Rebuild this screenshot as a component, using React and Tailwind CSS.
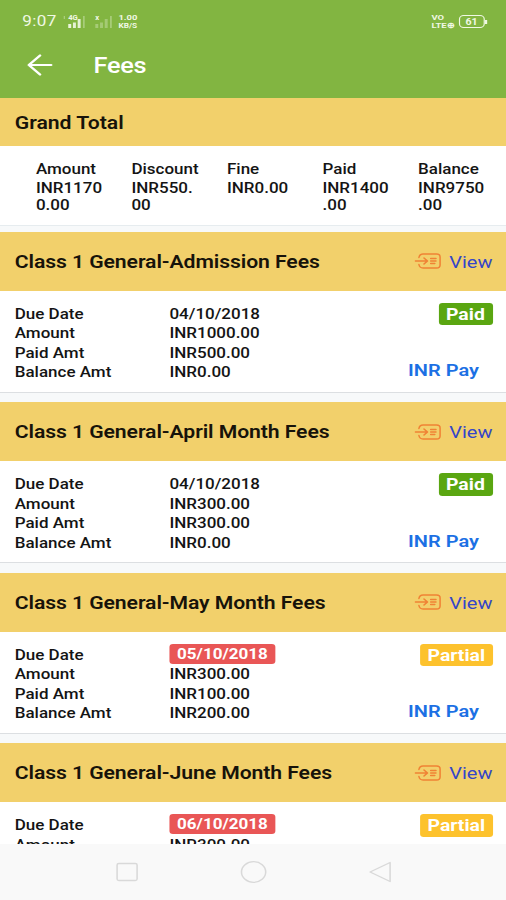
import React from "react";

const totals = [
  { label: "Amount", lines: ["INR1170", "0.00"] },
  { label: "Discount", lines: ["INR550.", "00"] },
  { label: "Fine", lines: ["INR0.00"] },
  { label: "Paid", lines: ["INR1400", ".00"] },
  { label: "Balance", lines: ["INR9750", ".00"] },
];

const fees = [
  { title: "Class 1 General-Admission Fees", due: "04/10/2018", amount: "INR1000.00", paid: "INR500.00", balance: "INR0.00", status: "Paid" },
  { title: "Class 1 General-April Month Fees", due: "04/10/2018", amount: "INR300.00", paid: "INR300.00", balance: "INR0.00", status: "Paid" },
  { title: "Class 1 General-May Month Fees", due: "05/10/2018", amount: "INR300.00", paid: "INR100.00", balance: "INR200.00", status: "Partial", overdue: true },
  { title: "Class 1 General-June Month Fees", due: "06/10/2018", amount: "INR300.00", paid: "INR100.00", balance: "INR200.00", status: "Partial", overdue: true },
];

const Signal = ({ tag, faded }) => (
  <svg width="19" height="15" viewBox="0 0 19 15" fill="#f0f8e4">
    {!faded && <rect x="0" y="2" width="1" height="3" opacity="0.5" />}
    <text x="4" y="5.5" fontSize="6.5" fontWeight="700">{tag}</text>
    <g opacity={faded ? 0.35 : 1}>
      <rect x="4" y="10" width="2.5" height="4" opacity="0.95" />
      <rect x="8" y="8.5" width="2.5" height="5.5" opacity="0.9" />
      <rect x="12" y="5" width="2.5" height="9" opacity="0.9" />
    </g>
    <rect x="16.5" y="2" width="1.5" height="12" opacity="0.35" />
  </svg>
);

const StatusBar = () => (
  <div className="flex h-[43px] items-center pl-[19px] pr-[16.5px] text-[#f0f8e4]">
    <span className="pt-[2px] text-[14.5px] leading-none tracking-[0.3px]">9:07</span>
    <div className="ml-[6px] flex gap-[4px]">
      <Signal tag="4G" />
      <Signal tag="x" faded />
    </div>
    <div className="ml-[4px] w-[17px] text-center text-[8px] font-bold leading-[8px]">
      <div>1.00</div>
      <div className="text-[7px]">KB/S</div>
    </div>
    <div className="ml-auto text-[8px] font-bold leading-[7.5px]">
      <div>VO</div>
      <div>LTE⊕</div>
    </div>
    <div className="ml-[3px] flex items-center">
      <div className="flex h-[13px] w-[22.5px] items-center justify-center rounded-[4px] border border-[#f0f8e4] pt-px text-[9px] font-bold leading-none">61</div>
      <div className="h-[4px] w-[1.5px] bg-[#f0f8e4]" />
    </div>
  </div>
);

const ViewIcon = () => (
  <svg width="23" height="16" viewBox="0 0 23 16" fill="none" stroke="#f08235" strokeWidth="1.3" strokeLinecap="round" strokeLinejoin="round">
    <path d="M4 4.5C4.4 2 5.6 1 7.5 1H19C21 1 22 2 22 4V12C22 14 21 15 19 15H7.5C5.6 15 4.4 14 4 11.5" />
    <path d="M1 8H11M8.3 5L11.3 8L8.3 11" />
    <path d="M14 5.5H18.5M14 8H18.5M14 10.5H17.5" />
  </svg>
);

const FeeCard = ({ fee }) => (
  <section className="h-[170.5px] shrink-0">
    <div className="flex h-[59px] items-center bg-[#f2d06b] pl-[12.5px] pr-[11.5px]">
      <h2 className="text-[18px] font-semibold tracking-[-0.07px] text-[#17130a]">{fee.title}</h2>
      <div className="ml-auto flex items-center gap-[7px]">
        <ViewIcon />
        <span className="pt-[3px] text-[17px] text-[#3546c8]">View</span>
      </div>
    </div>
    <div className="flex h-[102px] border-b border-[#dcdfe2] bg-white pl-[12.5px] pr-[11.5px] pt-[13px]">
      <dl className="grid h-[78px] w-[230px] grid-cols-[131.5px_1fr] grid-rows-4 text-[14.45px] font-medium leading-[21px] text-[#141414]">
        <dt>Due Date</dt>
        <dd>
          {fee.overdue ? (
            <span className="-mt-px block h-[20px] w-[90px] rounded-[3px] bg-[#e95656] text-center font-bold leading-[21px] text-white">{fee.due}</span>
          ) : fee.due}
        </dd>
        <dt>Amount</dt>
        <dd>{fee.amount}</dd>
        <dt>Paid Amt</dt>
        <dd>{fee.paid}</dd>
        <dt>Balance Amt</dt>
        <dd>{fee.balance}</dd>
      </dl>
      <div className="-mt-px ml-auto flex flex-col items-end">
        {fee.status === "Paid" ? (
          <span className="h-[22.5px] w-[46px] rounded-[3px] bg-[#5aa611] text-center text-[16.5px] font-bold leading-[24px] text-white">Paid</span>
        ) : (
          <span className="h-[22.5px] w-[61.5px] rounded-[3px] bg-[#fdc22d] text-center text-[16.5px] font-bold leading-[24px] text-white">Partial</span>
        )}
        <button className="mr-[11.5px] mt-[33px] text-[17px] font-semibold leading-[24px] text-[#1c70e4]">INR Pay</button>
      </div>
    </div>
  </section>
);

export default function App() {
  return (
    <div className="h-[900px] w-[506px] overflow-hidden">
      {/* 430px wide screen stretched to the window width */}
      <div className="flex h-[900px] w-[430px] origin-top-left scale-x-[1.17674] flex-col bg-[#f7f9fa] font-['Roboto',sans-serif]">
        <header className="h-[98px] shrink-0 bg-[#82b541]">
          <StatusBar />
          <div className="flex h-[44px] items-center pl-[23px] text-white">
            <svg width="22" height="22" viewBox="0 0 22 22" fill="none" stroke="currentColor" strokeWidth="2.2" strokeLinecap="round" strokeLinejoin="round">
              <path d="M20.5 11H1.5M11 1.5L1.5 11L11 20.5" />
            </svg>
            <h1 className="ml-[34.5px] pt-[3px] text-[21.5px] font-medium tracking-[-0.2px]">Fees</h1>
          </div>
        </header>

        <main className="flex h-[746px] flex-col overflow-hidden">
          <section className="h-[133.5px] shrink-0">
            <div className="flex h-[48px] items-center bg-[#f2d06b] pl-[12.5px] pt-px">
              <h2 className="text-[18px] font-semibold text-[#17130a]">Grand Total</h2>
            </div>
            <div className="flex h-[80px] border-b border-[#e6ecef] bg-white pl-[30.5px] pt-[14px] text-[14.45px] font-medium text-[#141414]">
              {totals.map((t) => (
                <div key={t.label} className="w-[81.2px] shrink-0">
                  <div className="leading-[20px]">{t.label}</div>
                  {t.lines.map((line) => (
                    <div key={line} className="leading-[17px]">{line}</div>
                  ))}
                </div>
              ))}
            </div>
          </section>
          {fees.map((fee) => (
            <FeeCard key={fee.title} fee={fee} />
          ))}
        </main>

        <nav className="flex h-[56px] shrink-0 items-center justify-center bg-[#f9f9f9]">
          <svg width="430" height="56" viewBox="0 0 430 56" fill="none" stroke="#d9d9d9" strokeWidth="1.3" strokeLinejoin="round">
            <rect x="99.5" y="19.5" width="17" height="17" rx="1.5" />
            <circle cx="215.5" cy="28" r="10.3" />
            <path d="M331.5 18.5V37.5L314.5 28Z" />
          </svg>
        </nav>
      </div>
    </div>
  );
}
